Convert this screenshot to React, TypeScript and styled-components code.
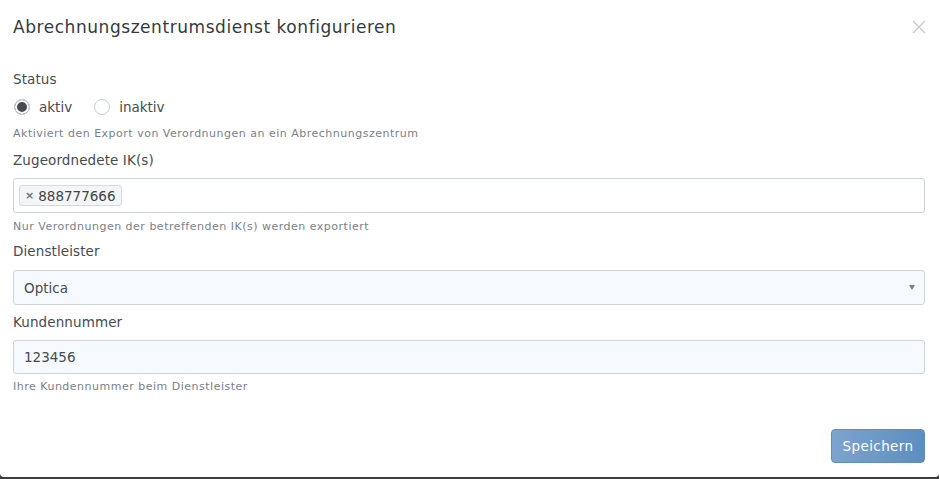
import React from "react";
import styled, { createGlobalStyle } from "styled-components";

const Global = createGlobalStyle`
  html, body { margin: 0; padding: 0; background: #3d3d3d; }
  body { font-family: "DejaVu Sans", "Noto Sans", sans-serif; }
  * { box-sizing: border-box; }
`;

const Modal = styled.div`
  width: 939px;
  height: 477px;
  background: #fff;
  border-radius: 0 0 4px 4px;
  display: flex;
  flex-direction: column;
`;

const Header = styled.div`
  display: flex;
  align-items: center;
  justify-content: space-between;
  height: 54px;
  padding: 0 13px 0 13px;
`;

const Title = styled.h4`
  margin: 0;
  font-size: 17px;
  font-weight: 400;
  color: #343a40;
  line-height: 24px;
  letter-spacing: 0.55px;
`;

const Close = styled.button`
  border: 0;
  background: none;
  padding: 0;
  width: 14px;
  height: 14px;
  display: flex;
  cursor: pointer;
`;

const Body = styled.div`
  padding: 15px 14px 0 13px;
  display: flex;
  flex-direction: column;
  flex: 1;
`;

const Label = styled.div<{ $mt?: number }>`
  font-size: 13.5px;
  line-height: 20px;
  color: #464b51;
  margin-top: ${(p) => p.$mt ?? 0}px;
  letter-spacing: 0.1px;
`;

const Help = styled.div<{ $mt?: number }>`
  font-size: 11px;
  line-height: 16px;
  color: #7a8189;
  margin-top: ${(p) => p.$mt ?? 0}px;
  letter-spacing: 0.5px;
`;

const RadioRow = styled.div`
  display: flex;
  align-items: center;
  height: 20px;
  margin-top: 8px;
  gap: 21px;
`;

const RadioItem = styled.label`
  display: flex;
  align-items: center;
  gap: 9px;
  font-size: 13.5px;
  color: #464b51;
`;

const RadioDot = styled.span<{ $on?: boolean }>`
  width: 16px;
  height: 16px;
  border-radius: 50%;
  border: 1px solid #c9cdd1;
  background: ${(p) => (p.$on ? "#474c53" : "#fff")};
  box-shadow: ${(p) => (p.$on ? "inset 0 0 0 2px #fff" : "none")};
  margin-left: 1px;
`;

const TagBox = styled.div`
  margin-top: 8px;
  height: 35px;
  border: 1px solid #cdd3d9;
  border-radius: 3px;
  background: #fff;
  display: flex;
  align-items: center;
  padding: 0 5px;
`;

const Tag = styled.span`
  display: inline-flex;
  align-items: center;
  gap: 4px;
  height: 21px;
  padding: 0 5px 0 5px;
  background: #f3f5f7;
  border: 1px solid #d6dbe0;
  border-radius: 3px;
  font-size: 13.5px;
  color: #3f444a;
`;

const TagX = styled.span`
  font-size: 11px;
  color: #6b7177;
  font-weight: 700;
`;

const Field = styled.div<{ $mt?: number; $h?: number }>`
  margin-top: ${(p) => p.$mt ?? 0}px;
  height: ${(p) => p.$h ?? 34}px;
  border: 1px solid #cdd4da;
  border-radius: 3px;
  background: #f6f9fd;
  display: flex;
  align-items: center;
  justify-content: space-between;
  padding: 0 9px 0 10px;
  font-size: 13.5px;
  color: #464b51;
`;

const Arrow = styled.span`
  width: 0;
  height: 0;
  border-left: 3.5px solid transparent;
  border-right: 3.5px solid transparent;
  border-top: 5px solid #7a7f85;
`;

const Footer = styled.div`
  display: flex;
  justify-content: flex-end;
  padding: 0 14px 14px 0;
  margin-top: auto;
`;

const Save = styled.button`
  height: 34px;
  width: 94px;
  border: 1px solid #5f8dbf;
  border-radius: 4px;
  background: linear-gradient(to right, #7ca4cd, #5d8dc0);
  color: #fff;
  font-family: inherit;
  font-size: 13.5px;
  letter-spacing: 0.4px;
  padding: 0;
`;

export default function App() {
  return (
    <>
      <Global />
      <Modal>
        <Header>
          <Title>Abrechnungszentrumsdienst konfigurieren</Title>
          <Close aria-label="Schließen">
            <svg width="14" height="14" viewBox="0 0 14 14">
              <path d="M1 1 L13 13 M13 1 L1 13" stroke="#cbcbcb" strokeWidth="1.4" />
            </svg>
          </Close>
        </Header>
        <Body>
          <Label>Status</Label>
          <RadioRow>
            <RadioItem>
              <RadioDot $on />
              aktiv
            </RadioItem>
            <RadioItem>
              <RadioDot />
              inaktiv
            </RadioItem>
          </RadioRow>
          <Help $mt={9}>Aktiviert den Export von Verordnungen an ein Abrechnungszentrum</Help>
          <Label $mt={8}>Zugeordnedete IK(s)</Label>
          <TagBox>
            <Tag>
              <TagX>×</TagX>888777666
            </Tag>
          </TagBox>
          <Help $mt={6}>Nur Verordnungen der betreffenden IK(s) werden exportiert</Help>
          <Label $mt={6}>Dienstleister</Label>
          <Field $mt={9} $h={35}>
            Optica
            <Arrow />
          </Field>
          <Label $mt={7}>Kundennummer</Label>
          <Field $mt={8} $h={34}>
            123456
          </Field>
          <Help $mt={5}>Ihre Kundennummer beim Dienstleister</Help>
        </Body>
        <Footer>
          <Save>Speichern</Save>
        </Footer>
      </Modal>
    </>
  );
}
